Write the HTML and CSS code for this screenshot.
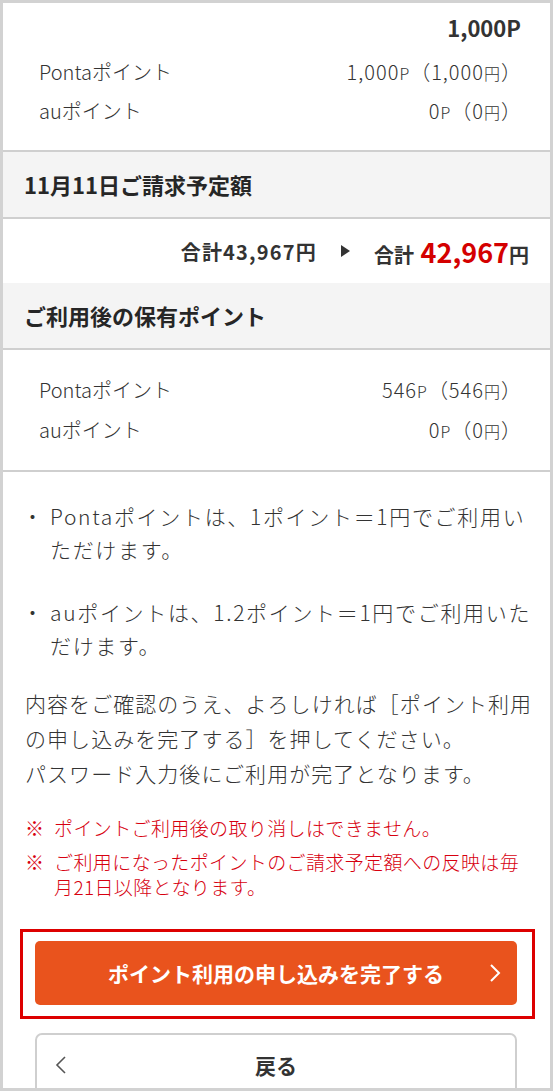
FILE: index.html
```html
<!DOCTYPE html>
<html lang="ja">
<head>
    <meta charset="UTF-8">
    <meta name="viewport" content="width=device-width, initial-scale=1.0">
    <title>ポイント利用確認</title>
    <link rel="stylesheet" href="styles.css">
</head>
<body>
<div class="frame">

    <section class="summary">
        <div class="summary-total">1,000P</div>
        <div class="point-row">
            <span>Pontaポイント</span>
            <span class="point-value">1,000<small>P</small>（1,000<small>円</small>）</span>
        </div>
        <div class="point-row">
            <span>auポイント</span>
            <span class="point-value">0<small>P</small>（0<small>円</small>）</span>
        </div>
    </section>

    <h2 class="section-head">11月11日ご請求予定額</h2>
    <div class="billing">
        <span class="billing-before">合計43,967円</span>
        <span class="billing-arrow"></span>
        <span class="billing-after">合計 <em>42,967</em>円</span>
    </div>

    <h2 class="section-head">ご利用後の保有ポイント</h2>
    <section class="points">
        <div class="point-row">
            <span>Pontaポイント</span>
            <span class="point-value">546<small>P</small>（546<small>円</small>）</span>
        </div>
        <div class="point-row">
            <span>auポイント</span>
            <span class="point-value">0<small>P</small>（0<small>円</small>）</span>
        </div>
    </section>

    <section class="notes">
        <ul class="rate-list">
            <li>Pontaポイントは、1ポイント＝1円でご利用いただけます。</li>
            <li>auポイントは、1.2ポイント＝1円でご利用いただけます。</li>
        </ul>

        <p class="confirm-text">内容をご確認のうえ、よろしければ［ポイント利用の申し込みを完了する］を押してください。<br>パスワード入力後にご利用が完了となります。</p>

        <ul class="caution-list">
            <li>ポイントご利用後の取り消しはできません。</li>
            <li>ご利用になったポイントのご請求予定額への反映は毎月21日以降となります。</li>
        </ul>

        <div class="highlight-box">
            <button class="btn-submit">
                ポイント利用の申し込みを完了する
                <svg class="chevron chevron--right" viewBox="0 0 12 20" width="12" height="20"><path d="M2 2 L10 10 L2 18" fill="none" stroke="#fff" stroke-width="2"/></svg>
            </button>
        </div>

        <button class="btn-back">
            <svg class="chevron chevron--left" viewBox="0 0 12 20" width="12" height="20"><path d="M10 2 L2 10 L10 18" fill="none" stroke="#555" stroke-width="1.6"/></svg>
            戻る
        </button>
    </section>

</div>
</body>
</html>
```

FILE: styles.css
```css
* {
    box-sizing: border-box;
}

body {
    margin: 0;
    font-family: "Noto Sans CJK JP", "Noto Sans", sans-serif;
    font-weight: 300;
    color: #333;
    background: #fff;
}

.frame {
    width: 553px;
    height: 1091px;
    border: 3px solid #d2d2d2;
    overflow: hidden;
}

/* point rows */
.summary {
    padding: 9px 0 20px;
    border-bottom: 2px solid #cfcfcf;
}

.summary-total {
    text-align: right;
    padding-right: 29px;
    font-size: 22px;
    font-weight: bold;
    line-height: 30px;
    margin-bottom: 10px;
}

.point-row {
    display: flex;
    justify-content: space-between;
    align-items: center;
    height: 39px;
    padding: 0 28px 0 36px;
    font-size: 20px;
    line-height: 1;
}

.point-value {
    letter-spacing: 0.05em;
}

.point-value small {
    font-size: 16px;
}

.points {
    padding: 20px 0;
    border-bottom: 2px solid #cfcfcf;
}

.points .point-row {
    height: 40px;
}

/* gray headings */
.section-head {
    margin: 0;
    padding-left: 21px;
    background: #f4f4f4;
    font-size: 22px;
    line-height: 65px;
    color: #262626;
    border-bottom: 2px solid #cfcfcf;
}

.billing {
    display: flex;
    justify-content: flex-end;
    align-items: center;
    height: 64px;
    padding-right: 21px;
    font-size: 20px;
    font-weight: bold;
}

.billing-before {
    letter-spacing: 0.06em;
}

.billing-arrow {
    width: 0;
    height: 0;
    margin: 0 24px;
    border-left: 9px solid #333;
    border-top: 6px solid transparent;
    border-bottom: 6px solid transparent;
}

.billing-after em {
    font-style: normal;
    font-size: 27px;
    color: #d40000;
    margin-left: 2px;
}

/* notes */
.notes {
    padding: 28px 15px 0 22px;
}

.rate-list {
    list-style: none;
    margin: 0 0 24px;
    padding: 0;
}

.rate-list li {
    position: relative;
    padding-left: 25px;
    font-size: 21px;
    line-height: 33px;
    margin-bottom: 30px;
    letter-spacing: 0.08em;
}

.rate-list li:last-child {
    margin-bottom: 0;
}

.rate-list li::before {
    content: "・";
    position: absolute;
    left: -3px;
}

.confirm-text {
    margin: 0 0 24px;
    font-size: 21px;
    line-height: 35px;
    letter-spacing: 0.05em;
}

.caution-list {
    list-style: none;
    margin: 0;
    padding: 0;
    color: #d7000f;
    font-size: 19px;
    line-height: 25px;
    letter-spacing: 0.02em;
}

.caution-list li {
    position: relative;
    padding-left: 29px;
    padding-right: 10px;
    margin-bottom: 9px;
}

.caution-list li:last-child {
    margin-bottom: 0;
}

.caution-list li::before {
    content: "※";
    position: absolute;
    left: 0;
}

/* buttons */
.highlight-box {
    margin: 30px 0 0 -5px;
    width: 515px;
    border: 3px solid #dd0000;
    padding: 9px 12px 11px;
}

.btn-submit,
.btn-back {
    position: relative;
    display: block;
    width: 482px;
    height: 64px;
    font-family: inherit;
    font-size: 21px;
    font-weight: bold;
    cursor: pointer;
}

.btn-submit {
    border: none;
    border-radius: 5px;
    background: #e9531d;
    color: #fff;
}

.btn-back {
    margin: 14px 0 0 10px;
    border: 2px solid #cfcfcf;
    border-radius: 7px;
    background: #fff;
    color: #333;
}

.chevron {
    position: absolute;
    top: 50%;
    margin-top: -10px;
}

.chevron--right {
    right: 16px;
}

.chevron--left {
    left: 18px;
}
```
